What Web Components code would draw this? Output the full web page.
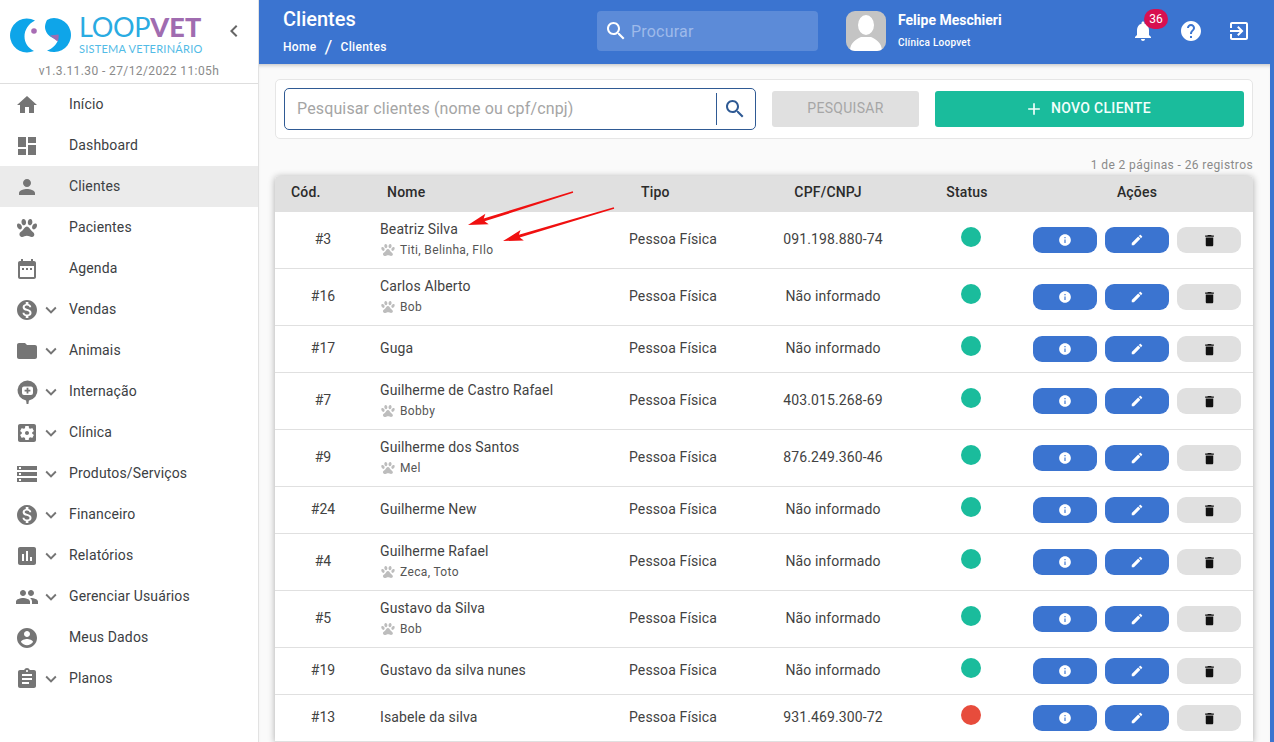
<!DOCTYPE html>
<html lang="pt-BR">
<head>
<meta charset="utf-8">
<title>Clientes - Loopvet</title>
<style>
  html, body { margin: 0; height: 100%; overflow: hidden; }
  body { font-family: Roboto, "Liberation Sans", sans-serif; font-size: 14px; color: #333; background: #fff; }
</style>
</head>
<body>
<app-shell>
  <app-sidebar slot="side">
    <nav-item icon="home">Início</nav-item>
    <nav-item icon="dashboard">Dashboard</nav-item>
    <nav-item icon="person" active>Clientes</nav-item>
    <nav-item icon="paw">Pacientes</nav-item>
    <nav-item icon="event">Agenda</nav-item>
    <nav-item icon="money" more>Vendas</nav-item>
    <nav-item icon="folder" more>Animais</nav-item>
    <nav-item icon="hospital" more>Internação</nav-item>
    <nav-item icon="settings" more>Clínica</nav-item>
    <nav-item icon="storage" more>Produtos/Serviços</nav-item>
    <nav-item icon="money" more>Financeiro</nav-item>
    <nav-item icon="chart" more>Relatórios</nav-item>
    <nav-item icon="people" more>Gerenciar Usuários</nav-item>
    <nav-item icon="account">Meus Dados</nav-item>
    <nav-item icon="clipboard" more>Planos</nav-item>
  </app-sidebar>
  <top-bar slot="top"></top-bar>
  <search-panel></search-panel>
  <client-table></client-table>
</app-shell>

<script>
const ICONS = {
  home: 'M10 20v-6h4v6h5v-8h3L12 3 2 12h3v8z',
  dashboard: 'M3 13h8V3H3v10zm0 8h8v-6H3v6zm10 0h8V11h-8v10zm0-18v6h8V3h-8z',
  person: 'M12 12c2.21 0 4-1.79 4-4s-1.79-4-4-4-4 1.79-4 4 1.79 4 4 4zm0 2c-2.67 0-8 1.34-8 4v2h16v-2c0-2.66-5.33-4-8-4z',
  paw: 'M8.35,3C9.53,2.83 10.82,4.12 11.03,5.9C11.24,7.67 10.34,9.18 9.16,9.35C7.98,9.5 6.7,8.22 6.5,6.45C6.27,4.67 7.17,3.16 8.35,3M15.5,3C16.69,3.16 17.59,4.67 17.35,6.45C17.14,8.22 15.86,9.5 14.68,9.35C13.5,9.18 12.6,7.67 12.82,5.9C13.03,4.12 14.32,2.83 15.5,3M3,7.6C4.14,7.11 5.69,8 6.5,9.55C7.26,11.13 7,12.79 5.87,13.28C4.74,13.77 3.2,12.89 2.41,11.32C1.62,9.75 1.9,8.08 3,7.6M21,7.6C22.1,8.08 22.38,9.75 21.59,11.32C20.8,12.89 19.26,13.77 18.13,13.28C17,12.79 16.74,11.13 17.5,9.55C18.31,8 19.86,7.11 21,7.6M19.33,18.38C19.37,19.32 18.65,20.36 17.79,20.75C16,21.57 13.88,19.87 11.89,19.87C9.9,19.87 7.76,21.64 6,20.75C5,20.26 4.31,18.96 4.44,17.88C4.62,16.39 6.41,15.59 7.47,14.5C8.88,13.09 9.88,10.44 11.89,10.44C13.89,10.44 14.95,13.05 16.3,14.5C17.41,15.72 19.26,16.75 19.33,18.38Z',
  event: 'M19 4h-1V2h-2v2H8V2H6v2H5c-1.1 0-2 .9-2 2v14c0 1.1.9 2 2 2h14c1.1 0 2-.9 2-2V6c0-1.1-.9-2-2-2zm0 16H5V9h14v11zM7 11h2v2H7zm4 0h2v2h-2zm4 0h2v2h-2z',
  money: 'M12 2C6.48 2 2 6.48 2 12s4.48 10 10 10 10-4.48 10-10S17.52 2 12 2zm1.41 16.09V20h-2.67v-1.93c-1.71-.36-3.16-1.46-3.27-3.4h1.96c.1 1.05.82 1.87 2.65 1.87 1.96 0 2.4-.98 2.4-1.59 0-.83-.44-1.61-2.67-2.14-2.48-.6-4.18-1.62-4.18-3.67 0-1.72 1.39-2.84 3.11-3.21V4h2.67v1.95c1.86.45 2.79 1.86 2.85 3.39H14.3c-.05-1.11-.64-1.87-2.22-1.87-1.5 0-2.4.68-2.4 1.64 0 .84.65 1.39 2.67 1.91s4.18 1.39 4.18 3.91c-.01 1.83-1.38 2.83-3.12 3.16z',
  folder: 'M10 4H4c-1.1 0-1.99.9-1.99 2L2 18c0 1.1.9 2 2 2h16c1.1 0 2-.9 2-2V8c0-1.1-.9-2-2-2h-8l-2-2z',
  hospital: 'M12.5 0.5a10 10 0 0 0-1.4 19.900L11.600 24h1.800l.5-3.600A10 10 0 0 0 12.500 .5zM9 6.500h7a2 2 0 0 1 2 2v4.500a2 2 0 0 1-2 2H9a2 2 0 0 1-2-2V8.500a2 2 0 0 1 2-2zM11.600 7.800v2H9.600v1.800h2v2h1.800v-2h2V9.800h-2v-2z',
  settings: 'M12 10c-1.1 0-2 .9-2 2s.9 2 2 2 2-.9 2-2-.9-2-2-2zm7-7H5c-1.11 0-2 .9-2 2v14c0 1.1.89 2 2 2h14c1.11 0 2-.9 2-2V5c0-1.1-.89-2-2-2zm-1.75 9c0 .23-.02.46-.05.68l1.48 1.16c.13.11.17.3.08.45l-1.4 2.42c-.09.15-.27.21-.43.15l-1.74-.7c-.36.28-.76.51-1.18.69l-.26 1.85c-.03.17-.18.3-.35.3h-2.8c-.17 0-.32-.13-.35-.29l-.26-1.85c-.43-.18-.82-.41-1.18-.69l-1.74.7c-.16.06-.34 0-.43-.15l-1.4-2.42c-.09-.15-.05-.34.08-.45l1.48-1.16c-.03-.23-.05-.46-.05-.69 0-.23.02-.46.05-.68l-1.48-1.16c-.13-.11-.17-.3-.08-.45l1.4-2.42c.09-.15.27-.21.43-.15l1.74.7c.36-.28.76-.51 1.18-.69l.26-1.85c.03-.17.18-.3.35-.3h2.8c.17 0 .32.13.35.29l.26 1.85c.43.18.82.41 1.18.69l1.74-.7c.16-.06.34 0 .43.15l1.4 2.42c.09.15.05.34-.08.45l-1.48 1.16c.03.23.05.46.05.69z',
  storage: 'M2 20h20v-4H2v4zm2-3h2v2H4v-2zM2 4v4h20V4H2zm4 3H4V5h2v2zm-4 7h20v-4H2v4zm2-3h2v2H4v-2z',
  chart: 'M19 3H5c-1.1 0-2 .9-2 2v14c0 1.1.9 2 2 2h14c1.1 0 2-.9 2-2V5c0-1.1-.9-2-2-2zM9 17H7v-7h2v7zm4 0h-2V7h2v10zm4 0h-2v-4h2v4z',
  people: 'M16 11c1.66 0 2.99-1.34 2.99-3S17.66 5 16 5c-1.66 0-3 1.34-3 3s1.34 3 3 3zm-8 0c1.66 0 2.99-1.34 2.99-3S9.66 5 8 5C6.34 5 5 6.34 5 8s1.34 3 3 3zm0 2c-2.33 0-7 1.17-7 3.5V19h14v-2.5c0-2.33-4.67-3.5-7-3.5zm8 0c-.29 0-.62.02-.97.05 1.16.84 1.97 1.97 1.97 3.45V19h6v-2.5c0-2.33-4.67-3.5-7-3.5z',
  account: 'M12 2C6.48 2 2 6.48 2 12s4.48 10 10 10 10-4.48 10-10S17.52 2 12 2zm0 3c1.66 0 3 1.34 3 3s-1.34 3-3 3-3-1.34-3-3 1.34-3 3-3zm0 14.2c-2.5 0-4.71-1.28-6-3.22.03-1.99 4-3.08 6-3.08 1.99 0 5.97 1.09 6 3.08-1.29 1.94-3.5 3.22-6 3.22z',
  clipboard: 'M19 3h-4.18C14.4 1.84 13.3 1 12 1c-1.3 0-2.4.84-2.82 2H5c-1.1 0-2 .9-2 2v14c0 1.1.9 2 2 2h14c1.1 0 2-.9 2-2V5c0-1.1-.9-2-2-2zm-7 0c.55 0 1 .45 1 1s-.45 1-1 1-1-.45-1-1 .45-1 1-1zm2 14H7v-2h7v2zm3-4H7v-2h10v2zm0-4H7V7h10v2z',
  search: 'M15.5 14h-.79l-.28-.27C15.41 12.59 16 11.11 16 9.5 16 5.91 13.09 3 9.5 3S3 5.91 3 9.5 5.91 16 9.5 16c1.61 0 3.09-.59 4.23-1.57l.27.28v.79l5 4.99L20.49 19l-4.99-5zm-6 0C7.01 14 5 11.99 5 9.5S7.01 5 9.5 5 14 7.01 14 9.5 11.99 14 9.5 14z',
  bell: 'M12 22c1.1 0 2-.9 2-2h-4c0 1.1.89 2 2 2zm6-6v-5c0-3.07-1.64-5.64-4.5-6.32V4c0-.83-.67-1.5-1.5-1.5s-1.5.67-1.5 1.5v.68C7.63 5.36 6 7.92 6 11v5l-2 2v1h16v-1l-2-2z',
  help: 'M12 2C6.48 2 2 6.48 2 12s4.48 10 10 10 10-4.48 10-10S17.52 2 12 2zm1 17h-2v-2h2v2zm2.07-7.75l-.9.92C13.45 12.9 13 13.5 13 15h-2v-.5c0-1.1.45-2.1 1.17-2.83l1.24-1.26c.37-.36.59-.86.59-1.41 0-1.1-.9-2-2-2s-2 .9-2 2H8c0-2.21 1.79-4 4-4s4 1.79 4 4c0 .88-.36 1.68-.93 2.25z',
  exit: 'M10.09 15.59L11.5 17l5-5-5-5-1.41 1.41L12.67 11H3v2h9.67l-2.58 2.59zM19 3H5c-1.11 0-2 .9-2 2v4h2V5h14v14H5v-4H3v4c0 1.1.89 2 2 2h14c1.1 0 2-.9 2-2V5c0-1.1-.9-2-2-2z',
  info: 'M12 2C6.48 2 2 6.48 2 12s4.48 10 10 10 10-4.48 10-10S17.52 2 12 2zm1 15h-2v-6h2v6zm0-8h-2V7h2v2z',
  edit: 'M3 17.25V21h3.75L17.81 9.94l-3.75-3.75L3 17.25zM20.71 7.04c.39-.39.39-1.02 0-1.41l-2.34-2.34c-.39-.39-1.02-.39-1.41 0l-1.83 1.83 3.75 3.75 1.83-1.83z',
  trash: 'M6 19c0 1.1.9 2 2 2h8c1.1 0 2-.9 2-2V7H6v12zM19 4h-3.5l-1-1h-5l-1 1H5v2h14V4z',
  plus: 'M19 13h-6v6h-2v-6H5v-2h6V5h2v6h6v2z',
  down: 'M16.59 8.59L12 13.17 7.41 8.59 6 10l6 6 6-6z',
  left: 'M15.41 7.41L14 6l-6 6 6 6 1.41-1.41L10.83 12z'
};

class AppIcon extends HTMLElement {
  connectedCallback() {
    const size = this.getAttribute('size') || 24;
    const path = ICONS[this.getAttribute('name')] || '';
    this.attachShadow({ mode: 'open' });
    this.shadowRoot.innerHTML = `
      <style>
        :host { display: inline-flex; width: ${size}px; height: ${size}px; flex: none; }
        svg { width: 100%; height: 100%; fill: currentColor; display: block; }
      </style>
      <svg viewBox="0 0 24 24"><path fill-rule="evenodd" d="${path}"/></svg>
    `;
  }
}
customElements.define('app-icon', AppIcon);

class AppShell extends HTMLElement {
  connectedCallback() {
    this.attachShadow({ mode: 'open' });
    this.shadowRoot.innerHTML = `
      <style>
        :host { display: flex; height: 742px; overflow: hidden; }
        .side { flex: 0 0 259px; display: block; }
        .main { flex: 1; min-width: 0; background: #3b74d0; display: flex; flex-direction: column; }
        .content {
          flex: 1; min-height: 0; overflow: hidden; margin-right: 4px; background: #fafafa;
          padding: 15px 17px 0 16px; box-shadow: inset 0 4px 4px -3px rgba(0,0,0,.25);
        }
      </style>
      <div class="side"><slot name="side"></slot></div>
      <div class="main">
        <slot name="top"></slot>
        <div class="content"><slot></slot></div>
      </div>
    `;
  }
}
customElements.define('app-shell', AppShell);

class NavItem extends HTMLElement {
  connectedCallback() {
    const more = this.hasAttribute('more');
    this.attachShadow({ mode: 'open' });
    this.shadowRoot.innerHTML = `
      <style>
        :host {
          display: grid; grid-template-columns: 24px 18px 1fr; column-gap: 3px; align-items: center;
          height: 41px; padding-left: 15px; color: #757575;
        }
        :host([active]) { background: #ebebeb; }
        .label { color: #3c4043; font-size: 14px; letter-spacing: .14px; margin: 0 0 2px 6px; white-space: nowrap; }
      </style>
      <app-icon name="${this.getAttribute('icon')}"></app-icon>
      ${more ? '<app-icon name="down" size="22" style="margin-left:-2px"></app-icon>' : '<span></span>'}
      <span class="label"><slot></slot></span>
    `;
  }
}
customElements.define('nav-item', NavItem);

class AppSidebar extends HTMLElement {
  connectedCallback() {
    this.attachShadow({ mode: 'open' });
    this.shadowRoot.innerHTML = `
      <style>
        :host { display: block; height: 742px; width: 259px; box-sizing: border-box; background: #fff; border-right: 1px solid #e2e2e2; }
        .head { height: 84px; box-sizing: border-box; border-bottom: 1px solid #dedede; }
        .brand { display: flex; align-items: flex-start; padding: 15px 0 0 9px; height: 47px; }
        .mark { width: 63px; height: 38px; flex: none; margin-top: 2px; }
        .words { margin: -1px 0 0 7px; width: 125px; font-family: Lato, sans-serif; }
        .name { font-size: 27px; line-height: 26px; font-weight: 400; color: #29abe2; letter-spacing: -.3px; white-space: nowrap; }
        .name b { color: #a06cb0; font-weight: 900; letter-spacing: .2px; }
        .sub { font-size: 11px; line-height: 12px; color: #52bbe6; letter-spacing: .25px; margin-top: 3px; white-space: nowrap; }
        .toggle { color: #666; margin: 4px 0 0 18px; }
        .ver { text-align: center; font-size: 12px; line-height: 16px; color: #8a8a8a; letter-spacing: .4px; padding: 1px 0 0 0; }
      </style>
      <div class="head">
        <div class="brand">
          <svg class="mark" viewBox="0 0 63 38">
            <path fill="#0ea5e9" d="M17.500 1.500A17 17 0 1 0 25 34c-6-3-9.500-8.500-9.500-14.500S19 7 26 3.600A17 17 0 0 0 17.500 1.500z"/>
            <path fill="#0ea5e9" d="M45 1a17 17 0 1 1-7 32.500c6-2 9-6 11-10l-7-3.500c-3-1.500-6-6-6-10 0-3 1-5 2-7A17 17 0 0 1 45 1z"/>
            <circle cx="25" cy="14" r="2.800" fill="#a86cb4"/>
            <path fill="#a06cb0" d="M41 18.500l8.500-1c.5 2.500 0 5-1 7z"/>
          </svg>
          <div class="words">
            <div class="name">LOOP<b>VET</b></div>
            <div class="sub">SISTEMA VETERINÁRIO</div>
          </div>
          <app-icon class="toggle" name="left"></app-icon>
        </div>
        <div class="ver">v1.3.11.30 - 27/12/2022 11:05h</div>
      </div>
      <slot></slot>
    `;
  }
}
customElements.define('app-sidebar', AppSidebar);

class TopBar extends HTMLElement {
  connectedCallback() {
    this.attachShadow({ mode: 'open' });
    this.shadowRoot.innerHTML = `
      <style>
        :host { display: flex; align-items: flex-start; height: 64px; flex: none; color: #fff; background: #3b74d0; position: relative; z-index: 1; }
        .title { width: 314px; padding: 8px 0 0 24px; box-sizing: content-box; }
        h1 { margin: 0; font-size: 20px; line-height: 22px; font-weight: 500; letter-spacing: 0; }
        .crumbs { display: flex; align-items: center; gap: 8px; margin-top: 8px; font-size: 12px; line-height: 18px; font-weight: 500; letter-spacing: .3px; }
        .crumbs i { font-style: normal; font-size: 19px; font-weight: 400; }
        .find { display: flex; align-items: center; gap: 3px; width: 221px; height: 40px; margin-top: 11px; padding-left: 7px; box-sizing: border-box; background: rgba(255,255,255,.17); border-radius: 4px; color: #9ebaea; font-size: 16px; letter-spacing: .2px; }
        .find app-icon { color: #fff; }
        .user { display: flex; align-items: flex-start; margin: 11px 0 0 28px; width: 285px; }
        .avatar { width: 40px; height: 40px; flex: none; border-radius: 9px; display: block; }
        .who { margin-left: 12px; }
        .who b { display: block; font-size: 14px; line-height: 18px; font-weight: 700; letter-spacing: 0; }
        .who span { display: block; margin-top: 7px; font-size: 10px; line-height: 14px; font-weight: 500; letter-spacing: .25px; }
        .acts { display: flex; gap: 24px; margin-top: 19px; }
        .bell { position: relative; }
        .badge { position: absolute; left: 13px; top: -10px; min-width: 24px; height: 20px; box-sizing: border-box; padding: 0 4px; border-radius: 10px; background: #d81050; font-size: 12px; line-height: 20px; text-align: center; }
      </style>
      <div class="title">
        <h1>Clientes</h1>
        <div class="crumbs"><span>Home</span><i>/</i><span>Clientes</span></div>
      </div>
      <div class="find"><app-icon name="search"></app-icon><span>Procurar</span></div>
      <div class="user">
        <svg class="avatar" viewBox="0 0 40 40">
          <rect width="40" height="40" fill="#c4c4c4"/>
          <ellipse cx="20" cy="14" rx="8" ry="10" fill="#fff"/>
          <path fill="#fff" d="M4 40c0-9 7-12 11-14h10c4 2 11 5 11 14z"/>
        </svg>
        <div class="who"><b>Felipe Meschieri</b><span>Clínica Loopvet</span></div>
      </div>
      <div class="acts">
        <span class="bell"><app-icon name="bell"></app-icon><span class="badge">36</span></span>
        <app-icon name="help"></app-icon>
        <app-icon name="exit"></app-icon>
      </div>
    `;
  }
}
customElements.define('top-bar', TopBar);

class SearchPanel extends HTMLElement {
  connectedCallback() {
    this.attachShadow({ mode: 'open' });
    this.shadowRoot.innerHTML = `
      <style>
        :host { display: flex; align-items: center; box-sizing: border-box; height: 60px; padding: 0 8px; background: #fff; border: 1px solid #e6e6e6; border-radius: 5px; }
        .box { display: flex; align-items: center; width: 472px; height: 42px; box-sizing: border-box; border: 1px solid #2f5a94; border-radius: 5px; padding-left: 12px; color: #a5a5a5; font-size: 16px; letter-spacing: .14px; flex: none; }
        .box span { flex: 1; padding-bottom: 2px; }
        .end { display: flex; align-items: center; justify-content: center; width: 39px; height: 32px; padding-right: 3px; box-sizing: border-box; border-left: 1px solid #2f5a94; color: #2f5a94; }
        button { font: inherit; font-size: 14px; font-weight: 400; height: 36px; padding: 0 0 2px; border: 0; border-radius: 3px; letter-spacing: .3px; display: flex; align-items: center; justify-content: center; flex: none; }
        .go { width: 147px; margin-left: 16px; background: #e0e0e0; color: #a6a6a6; }
        .new { width: 309px; margin-left: 16px; padding-right: 4px; background: #1abc9c; color: #f2fffc; font-weight: 500; gap: 7px; }
        .new app-icon { margin-top: 2px; }
      </style>
      <div class="box"><span>Pesquisar clientes (nome ou cpf/cnpj)</span><div class="end"><app-icon name="search"></app-icon></div></div>
      <button class="go">PESQUISAR</button>
      <button class="new"><app-icon name="plus" size="20"></app-icon>NOVO CLIENTE</button>
    `;
  }
}
customElements.define('search-panel', SearchPanel);

class ClientRow extends HTMLElement {
  connectedCallback() {
    const pets = this.getAttribute('pets');
    const off = this.getAttribute('status') === 'off';
    this.attachShadow({ mode: 'open' });
    this.shadowRoot.innerHTML = `
      <style>
        :host {
          display: grid; grid-template-columns: 96px 258px 116px 176px 100px 1fr; align-items: center;
          box-sizing: border-box; height: ${pets ? 57 : 47}px; background: #fff; border-bottom: 1px solid #e0e0e0;
          color: #424242; font-size: 14px; letter-spacing: .12px;
        }
        .txt { margin-bottom: 2px; }
        .mid { text-align: center; }
        .name { padding-left: 9px; margin-bottom: ${pets ? 3 : 2}px; }
        .name > div:first-child { line-height: 20px; }
        .pets { display: flex; align-items: center; gap: 4px; font-size: 12px; line-height: 18px; margin-top: 2px; color: #555; letter-spacing: .35px; }
        .pets app-icon { color: #bdbdbd; }
        .dot { width: 20px; height: 20px; border-radius: 50%; margin: 0 auto 7px; background: ${off ? '#e74c3c' : '#1abc9c'}; }
        .btns { display: flex; gap: 8px; padding-left: 12px; }
        .btn { width: 64px; height: 26px; border-radius: 9px; background: #3b74d0; color: #fff; display: flex; align-items: center; justify-content: center; }
        .btn.del { background: #e0e0e0; color: #111; }
      </style>
      <div class="mid txt">${this.getAttribute('code')}</div>
      <div class="name">
        <div>${this.getAttribute('name')}</div>
        ${pets ? `<div class="pets"><app-icon name="paw" size="16"></app-icon><span>${pets}</span></div>` : ''}
      </div>
      <div class="txt">Pessoa Física</div>
      <div class="mid txt">${this.getAttribute('doc')}</div>
      <div class="dot"></div>
      <div class="btns">
        <span class="btn"><app-icon name="info" size="14"></app-icon></span>
        <span class="btn"><app-icon name="edit" size="14"></app-icon></span>
        <span class="btn del"><app-icon name="trash" size="15"></app-icon></span>
      </div>
    `;
  }
}
customElements.define('client-row', ClientRow);

const CLIENTS = [
  { code: '#3', name: 'Beatriz Silva', pets: 'Titi, Belinha, FIlo', doc: '091.198.880-74' },
  { code: '#16', name: 'Carlos Alberto', pets: 'Bob', doc: 'Não informado' },
  { code: '#17', name: 'Guga', doc: 'Não informado' },
  { code: '#7', name: 'Guilherme de Castro Rafael', pets: 'Bobby', doc: '403.015.268-69' },
  { code: '#9', name: 'Guilherme dos Santos', pets: 'Mel', doc: '876.249.360-46' },
  { code: '#24', name: 'Guilherme New', doc: 'Não informado' },
  { code: '#4', name: 'Guilherme Rafael', pets: 'Zeca, Toto', doc: 'Não informado' },
  { code: '#5', name: 'Gustavo da Silva', pets: 'Bob', doc: 'Não informado' },
  { code: '#19', name: 'Gustavo da silva nunes', doc: 'Não informado' },
  { code: '#13', name: 'Isabele da silva', doc: '931.469.300-72', status: 'off' }
];

class ClientTable extends HTMLElement {
  connectedCallback() {
    this.attachShadow({ mode: 'open' });
    this.shadowRoot.innerHTML = `
      <style>
        :host { display: block; }
        .count { text-align: right; font-size: 12px; line-height: 16px; letter-spacing: .4px; color: #8a8a8a; margin: 18px 0 3px; }
        .table { position: relative; border-radius: 4px 4px 0 0; background: #fff; box-shadow: 0 1px 7px rgba(0,0,0,.32); }
        .head {
          display: grid; grid-template-columns: 112px 254px 126px 122px 156px 184px 1fr; align-items: center;
          height: 36px; box-sizing: border-box; padding-bottom: 4px; background: #e0e0e0; border-radius: 4px 4px 0 0;
          font-size: 14px; font-weight: 500; color: #2b2b2b; letter-spacing: .2px;
        }
        .head div:first-child { padding-left: 16px; }
        .mid { text-align: center; }
        .arrows { position: absolute; left: 0; top: 0; width: 400px; height: 90px; pointer-events: none; }
      </style>
      <div class="count">1 de 2 páginas - 26 registros</div>
      <div class="table">
        <div class="head">
          <div>Cód.</div><div>Nome</div><div>Tipo</div><div class="mid">CPF/CNPJ</div><div class="mid">Status</div><div class="mid">Ações</div>
        </div>
        <div id="rows"></div>
        <svg class="arrows" viewBox="0 0 400 90">
          <path fill="#f01010" d="M193 49L210.400 37.800L208.700 42.500L297.800 15.200L298.200 16.800L209.600 45.300L213.700 48.200Z"/>
          <path fill="#f01010" d="M228 65L245.600 54L243.900 58.800L338.800 31.200L339.200 32.800L244.700 61.600L248.800 64.600Z"/>
        </svg>
      </div>
    `;
    const rows = this.shadowRoot.getElementById('rows');
    CLIENTS.forEach(c => {
      const row = document.createElement('client-row');
      Object.keys(c).forEach(k => row.setAttribute(k, c[k]));
      rows.appendChild(row);
    });
  }
}
customElements.define('client-table', ClientTable);
</script>
</body>
</html>
